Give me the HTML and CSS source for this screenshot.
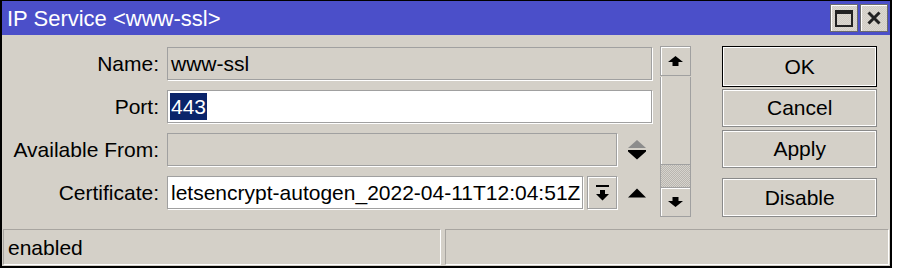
FILE: index.html
```html
<!DOCTYPE html>
<html>
<head>
	<meta charset="UTF-8">
	<title>IP Service &lt;www-ssl&gt;</title>
	<link rel="stylesheet" href="styles.css">
</head>
<body>
	<div class="win">
		<div class="titlebar">
			<span class="title">IP Service &lt;www-ssl&gt;</span>
			<div class="tbtns">
				<div class="tbtn">
					<svg width="18" height="17" viewBox="0 0 18 17"><path d="M0 0H18V17H0Z M2 4V15H16V4Z" fill="#222" fill-rule="evenodd"/></svg>
				</div>
				<div class="tbtn">
					<svg width="14" height="14" viewBox="0 0 14 14"><path d="M1.5 1.5L12.5 12.5M12.5 1.5L1.5 12.5" stroke="#222" stroke-width="3"/></svg>
				</div>
			</div>
		</div>

		<div class="content">
			<div class="form">
				<div class="row">
					<label>Name:</label>
					<div class="val"><div class="field ro">www-ssl</div></div>
				</div>
				<div class="row">
					<label>Port:</label>
					<div class="val"><div class="field"><span class="sel">443</span></div></div>
				</div>
				<div class="row">
					<label>Available From:</label>
					<div class="val">
						<div class="field ro"></div>
						<div class="slot">
							<svg width="18" height="20" viewBox="0 0 18 20"><path d="M0 8L9 0L18 8Z" fill="#8c8c8c"/><path d="M0 10H18V11.5L9 19.5L0 11.5Z" fill="#000"/></svg>
						</div>
					</div>
				</div>
				<div class="row">
					<label>Certificate:</label>
					<div class="val">
						<div class="field">letsencrypt-autogen_2022-04-11T12:04:51Z</div>
						<div class="ddbtn">
							<svg width="13" height="16" viewBox="0 0 13 16"><path d="M0 0H13V2H0Z M4 5H9V9H13L6.5 15.5L0 9H4Z" fill="#000"/></svg>
						</div>
						<div class="slot">
							<svg width="18" height="10" viewBox="0 0 18 10"><path d="M0 9.5L9 0.5L18 9.5Z" fill="#000"/></svg>
						</div>
					</div>
				</div>
			</div>

			<div class="vscroll">
				<div class="sbtn">
					<svg width="15" height="10" viewBox="0 0 15 10"><path d="M7.5 0L15 6H10.5V10H4.5V6H0Z" fill="#000"/></svg>
				</div>
				<div class="track"><div class="thumb"></div></div>
				<div class="sbtn">
					<svg width="15" height="10" viewBox="0 0 15 10"><path d="M7.5 10L15 4H10.5V0H4.5V4H0Z" fill="#000"/></svg>
				</div>
			</div>

			<div class="actions">
				<div class="btn ok">OK</div>
				<div class="btn cancel">Cancel</div>
				<div class="btn apply">Apply</div>
				<div class="btn">Disable</div>
			</div>
		</div>

		<div class="status">
			<div class="pane first">enabled</div>
			<div class="pane"></div>
		</div>
	</div>
</body>
</html>
```

FILE: styles.css
```css
* {
	box-sizing: border-box;
}
body {
	margin: 0;
	background: #fff;
	font-family: "Liberation Sans", Arial, sans-serif;
	font-size: 21px;
	color: #000;
}
.win {
	width: 892px;
	border: 2px solid #000;
	border-top-width: 1px;
	padding-bottom: 1px;
	background: #d4d0c8;
}

/* title bar */
.titlebar {
	height: 34px;
	display: flex;
	align-items: center;
	justify-content: space-between;
	padding: 0 2px 0 5px;
	background: #4b4fc9;
}
.title {
	color: #fff;
	font-size: 22px;
	padding-top: 2px;
}
.tbtns {
	display: flex;
	gap: 2px;
}
.tbtn {
	width: 28px;
	height: 28px;
	display: flex;
	align-items: center;
	justify-content: center;
	background: repeating-conic-gradient(#d0ccc4 0 25%, #dcd8d0 0 50%) 0 0/2px 2px;
	border: 1px solid #6b6b6b;
	box-shadow: inset 1px 1px 0 #fff;
}

/* main area */
.content {
	height: 182px;
	display: flex;
	padding: 11px 13px 0 2px;
}
.form {
	width: 650px;
	margin-top: 1px;
	display: flex;
	flex-direction: column;
	gap: 10px;
}
.row {
	display: grid;
	grid-template-columns: 155px 1fr;
	column-gap: 8px;
	height: 33px;
}
.row label {
	text-align: right;
	align-self: center;
}
.val {
	display: flex;
	align-items: center;
}
.field {
	flex: 1;
	height: 33px;
	display: flex;
	align-items: center;
	padding-left: 3px;
	background: #fff;
	border: 1px solid #a0a0a0;
	box-shadow: 1px 1px 0 #fff;
	white-space: nowrap;
	overflow: hidden;
}
.field.ro {
	background: #d4d0c8;
}
.sel {
	background: #0a246a;
	color: #fff;
	padding: 0 1px;
	margin-left: -1px;
	line-height: 27px;
}
.slot {
	width: 35px;
	height: 33px;
	display: flex;
	align-items: center;
	justify-content: center;
	padding-left: 4px;
}
.ddbtn {
	width: 30px;
	height: 33px;
	margin-left: 4px;
	display: flex;
	align-items: center;
	justify-content: center;
	border: 1px solid #a0a0a0;
	box-shadow: inset 1px 1px 0 #fff, 1px 1px 0 #fff;
}

/* scrollbar */
.vscroll {
	width: 31px;
	height: 171px;
	margin-left: 8px;
	display: flex;
	flex-direction: column;
}
.sbtn {
	height: 30px;
	display: flex;
	align-items: center;
	justify-content: center;
	border: 1px solid #a0a0a0;
	box-shadow: inset 1px 1px 0 #fff;
}
.track {
	flex: 1;
	display: flex;
	flex-direction: column;
	justify-content: flex-end;
	border-left: 1px solid #a0a0a0;
	border-right: 1px solid #a0a0a0;
	box-shadow: inset 1px 0 0 #fff;
	margin-top: 1px;
}
.thumb {
	height: 23px;
	background: repeating-conic-gradient(#b9b6b0 0 25%, #d6d3cd 0 50%) 0 0/2px 2px;
	border-top: 1px solid #a0a0a0;
}

/* buttons */
.actions {
	width: 155px;
	margin-left: 31px;
	display: flex;
	flex-direction: column;
}
.btn {
	height: 39px;
	display: flex;
	align-items: center;
	justify-content: center;
	border: 1px solid #8a8a8a;
	box-shadow: inset 1px 1px 0 #fff, inset -1px -1px 0 #fff;
}
.btn.ok {
	height: 41px;
	margin-bottom: 2px;
	border-color: #000;
}
.btn.cancel {
	height: 38px;
	margin-bottom: 3px;
}
.btn.apply {
	height: 38px;
	margin-bottom: 10px;
}

/* status bar */
.status {
	display: flex;
	gap: 4px;
	margin-top: 12px;
	padding: 0 1px 0 1px;
	height: 36px;
}
.pane {
	flex: 1;
	display: flex;
	align-items: center;
	padding-left: 4px;
	padding-top: 2px;
	border: 1px solid #a8a5a0;
	border-right-color: #fff;
	border-bottom-color: #fff;
}
.pane.first {
	flex: 0 0 438px;
}
```
